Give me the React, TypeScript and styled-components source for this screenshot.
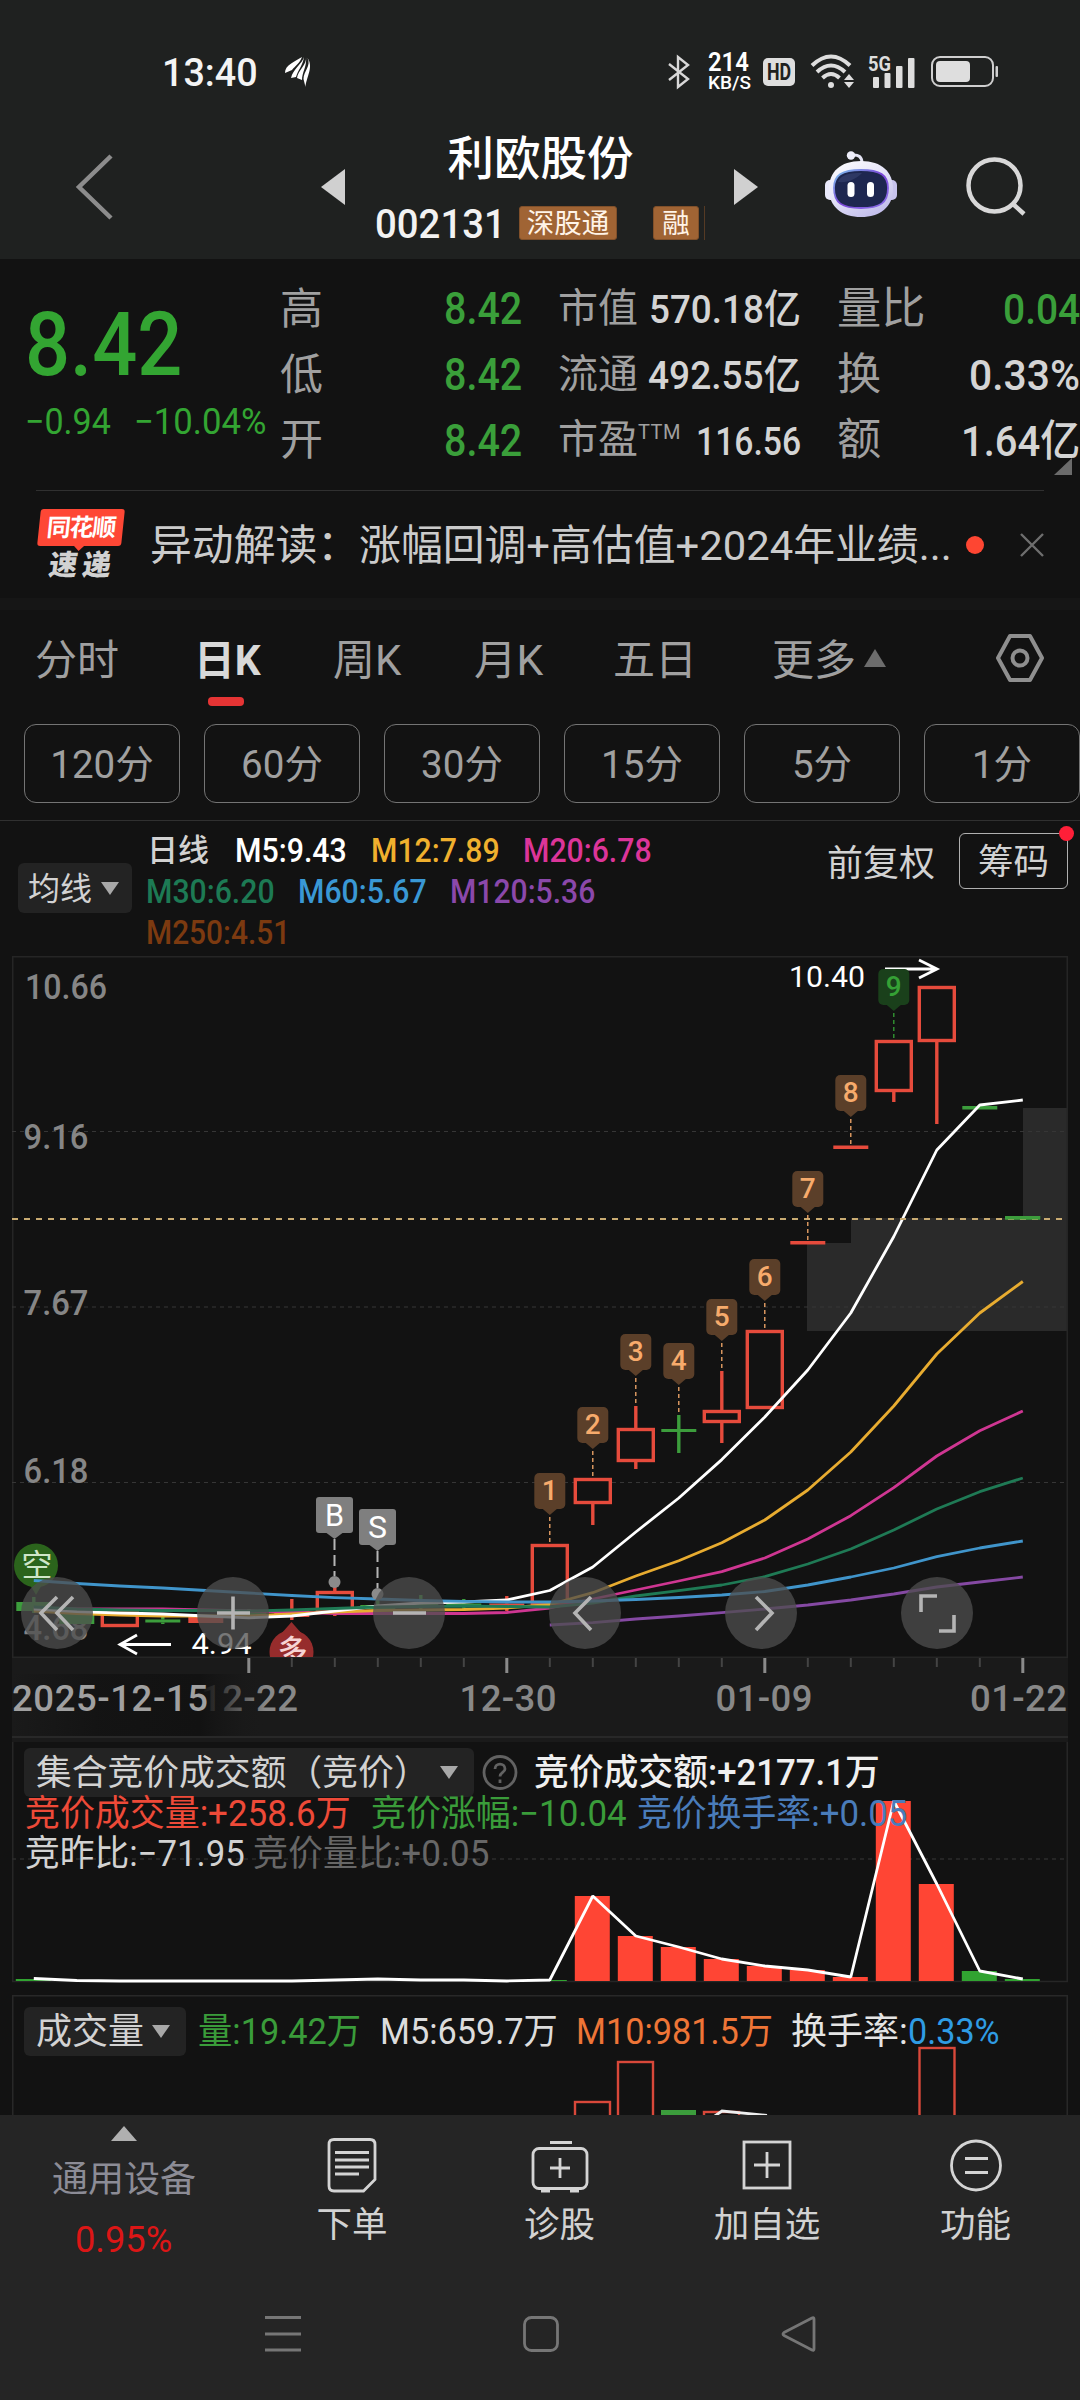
import React, { useLayoutEffect, useRef, useState } from 'react';
import styled, { createGlobalStyle } from 'styled-components';

const GlobalStyle = createGlobalStyle`
  * { box-sizing: border-box; }
  body { margin: 0; background: #121212; }
`;

const FONT = 'Roboto, "Noto Sans CJK SC", sans-serif';

const Screen = styled.main`
  width: 1080px;
  height: 2400px;
  overflow: hidden;
  background: #121212;
  color: #d2d2d2;
  font-family: ${FONT};
  display: flex;
  flex-direction: column;
`;

/* ---------- text squeezed to a fixed advance width ---------- */

const FitBox = styled.span<{ $w: number; $size: number; $color?: string; $weight?: number; $ml?: number; $lh?: number }>`
  display: block;
  flex: none;
  width: ${(p) => p.$w}px;
  margin-left: ${(p) => p.$ml ?? 0}px;
  font-size: ${(p) => p.$size}px;
  line-height: ${(p) => p.$lh ?? Math.round(p.$size * 1.15)}px;
  font-weight: ${(p) => p.$weight ?? 400};
  color: ${(p) => p.$color ?? 'inherit'};
  white-space: nowrap;
`;
const FitInner = styled.span`
  display: inline-block;
  transform-origin: 0 50%;
`;

type FitProps = { w: number; size: number; color?: string; weight?: number; ml?: number; lh?: number; children: React.ReactNode };

function Fit({ w, size, color, weight, ml, lh, children }: FitProps) {
  const ref = useRef<HTMLSpanElement>(null);
  const [k, setK] = useState(1);
  useLayoutEffect(() => {
    if (ref.current && ref.current.offsetWidth) setK(w / ref.current.offsetWidth);
  }, [w, children]);
  return (
    <FitBox $w={w} $size={size} $color={color} $weight={weight} $ml={ml} $lh={lh}>
      <FitInner ref={ref} style={{ transform: `translateY(1px) scaleX(${k})` }}>{children}</FitInner>
    </FitBox>
  );
}

/* ---------- header ---------- */

const Header = styled.header`
  height: 259px;
  flex: none;
  background: #1f2120;
`;
const StatusBar = styled.div`
  height: 96px;
  padding: 48px 82px 0 162px;
  display: flex;
  align-items: center;
`;
const Spacer = styled.div`
  flex: 1;
`;
const Speed = styled.div`
  margin-left: 18px;
  width: 42px;
  display: flex;
  flex-direction: column;
  color: #fff;
`;
const HdBadge = styled.div`
  margin-left: 13px;
  width: 32px;
  height: 28px;
  border-radius: 5px;
  background: #dedede;
  color: #1f2120;
  display: flex;
  justify-content: center;
  align-items: center;
`;
const StatusIcon = styled.svg<{ $ml: number }>`
  flex: none;
  overflow: visible;
  margin-left: ${(p) => p.$ml}px;
`;
const NavRow = styled.div`
  height: 163px;
  padding: 19px 0 0 74px;
  display: flex;
  align-items: center;
`;
const NavIcon = styled.svg<{ $ml?: number }>`
  flex: none;
  display: block;
  margin-left: ${(p) => p.$ml ?? 0}px;
`;
const TitleStack = styled.div`
  width: 329px;
  margin: 0 29px 3px 31px;
  display: flex;
  flex-direction: column;
  gap: 19px;
`;
const Title = styled.h1`
  margin: 0;
  font-size: 46.5px;
  line-height: 56px;
  font-weight: 500;
  color: #fff;
  text-align: center;
`;
const CodeRow = styled.div`
  height: 34px;
  display: flex;
  align-items: center;
`;
const Tag = styled.span<{ $w: number; $ml: number }>`
  width: ${(p) => p.$w}px;
  height: 34px;
  flex: none;
  margin-left: ${(p) => p.$ml}px;
  background: #a06434;
  border: 1px solid #80502a;
  border-radius: 3px;
  color: #fff4e8;
  font-size: 27.5px;
  line-height: 33px;
  text-align: center;
`;
const TagEdge = styled.i`
  width: 1px;
  height: 34px;
  margin-left: 5px;
  background: #553a24;
`;

/* ---------- quote ---------- */

const Quote = styled.section`
  position: relative;
  height: 231px;
  flex: none;
  padding: 17px 0 0 25px;
  display: flex;
`;
const PriceBlock = styled.div`
  width: 255px;
  padding-top: 23px;
  color: #33a532;
`;
const Delta = styled.div`
  display: flex;
  margin-top: 12px;
`;
const Stats = styled.div<{ $w: number; $ml?: number }>`
  width: ${(p) => p.$w}px;
  margin-left: ${(p) => p.$ml ?? 0}px;
  flex: none;
`;
const StatRow = styled.div`
  height: 65.7px;
  display: flex;
  align-items: center;
  justify-content: space-between;
`;
const StatLabel = styled.span<{ $size: number }>`
  font-size: ${(p) => p.$size}px;
  line-height: 60px;
  color: #a0a0a0;
  white-space: nowrap;
  sup { font-size: 20px; line-height: 0; vertical-align: 14px; letter-spacing: 0.5px; }
`;
const Corner = styled.i`
  position: absolute;
  right: 8px;
  bottom: 15px;
  border-left: 18px solid transparent;
  border-bottom: 17px solid #6b6b6b;
`;
const Rule = styled.div<{ $inset: number }>`
  height: 1px;
  flex: none;
  margin: 0 ${(p) => p.$inset}px;
  background: #303030;
`;

/* ---------- news ---------- */

const News = styled.section`
  height: 107px;
  flex: none;
  padding-left: 36px;
  display: flex;
  align-items: center;
`;
const Brand = styled.div`
  width: 90px;
  height: 74px;
  display: flex;
  flex-direction: column;
  align-items: center;
`;
const BrandTop = styled.div`
  position: relative;
  width: 84px;
  height: 37px;
  margin-top: 1px;
  border-radius: 3px;
  background: #fe4735;
  transform: skewX(-6deg);
  color: #fff;
  font-size: 24px;
  line-height: 38px;
  font-weight: 700;
  letter-spacing: -1.2px;
  text-align: center;
  &::after {
    content: '';
    position: absolute;
    left: 36px;
    top: 36px;
    border: 6px solid transparent;
    border-top-color: #fe4735;
    border-bottom: 0;
  }
`;
const BrandBottom = styled.div`
  transform: skewX(-8deg);
  font-size: 28.5px;
  line-height: 34px;
  font-weight: 900;
  letter-spacing: 5px;
  margin: 3px 0 0 4px;
  color: #d2d2d2;
`;
const Dot = styled.i<{ $ml: number }>`
  width: 18px;
  height: 18px;
  flex: none;
  border-radius: 50%;
  margin-left: ${(p) => p.$ml}px;
  background: #fe4632;
`;
const Band = styled.div`
  height: 12px;
  flex: none;
  background: #161616;
`;

/* ---------- tabs ---------- */

const Tabs = styled.nav`
  height: 114px;
  flex: none;
  padding: 13px 0 0 35px;
  display: flex;
`;
const Tab = styled.div<{ $ml: number; $active?: boolean }>`
  margin-left: ${(p) => p.$ml}px;
  height: 83px;
  display: flex;
  flex-direction: column;
  align-items: center;
  color: ${(p) => (p.$active ? '#d8d8d8' : '#a0a0a0')};
  &::after {
    content: '';
    display: ${(p) => (p.$active ? 'block' : 'none')};
    width: 36px;
    height: 9px;
    margin-right: 3px;
    border-radius: 4px;
    background: #e53434;
  }
`;
const Periods = styled.div`
  height: 96px;
  flex: none;
  padding-left: 24px;
  display: flex;
  gap: 24px;
`;
const Pill = styled.button`
  width: 156px;
  height: 79px;
  flex: none;
  padding: 2px 0 0;
  border: 1.5px solid #747474;
  border-radius: 12px;
  background: none;
  font: 400 38.5px/74px ${FONT};
  color: #a0a0a0;
`;

/* ---------- legend ---------- */

const Legend = styled.section`
  position: relative;
  height: 132px;
  flex: none;
  padding-left: 18px;
  display: flex;
  align-items: flex-start;
`;
const Chip = styled.div<{ $w: number; $h: number; $mt?: number; $pl: number }>`
  width: ${(p) => p.$w}px;
  height: ${(p) => p.$h}px;
  flex: none;
  margin-top: ${(p) => p.$mt ?? 0}px;
  padding-left: ${(p) => p.$pl}px;
  border-radius: 6px;
  background: #232323;
  display: flex;
  align-items: center;
`;
const Down = styled.i<{ $ml: number }>`
  margin-left: ${(p) => p.$ml}px;
  border: 9.5px solid transparent;
  border-top: 13px solid #a8a8a8;
  border-bottom: 0;
`;
const LegendRows = styled.div`
  width: 666px;
  margin: 8px 0 0 14px;
`;
const LegendRow = styled.div`
  height: 41px;
  display: flex;
  align-items: center;
`;
const Adjust = styled.div`
  margin-top: 18px;
`;
const ChipsButton = styled.div`
  position: relative;
  width: 109px;
  height: 56px;
  margin: 12px 0 0 24px;
  border: 1.5px solid #b0b0b0;
  border-radius: 6px;
  font-size: 35.5px;
  line-height: 56px;
  text-align: center;
  &::after {
    content: '';
    position: absolute;
    top: -8px;
    right: -7px;
    width: 15px;
    height: 15px;
    border-radius: 50%;
    background: #ff1f38;
  }
`;

/* ---------- charts ---------- */

const ChartBox = styled.section<{ $h: number }>`
  position: relative;
  height: ${(p) => p.$h}px;
  flex: none;
`;
const Canvas = styled.svg`
  display: block;
  font-family: ${FONT};
`;
const BackCanvas = styled(Canvas)`
  position: absolute;
  inset: 0;
`;
const Controls = styled.div`
  position: absolute;
  left: 21px;
  top: 624px;
  display: flex;
  gap: 104px;
`;
const RoundButton = styled.button`
  width: 72px;
  height: 72px;
  padding: 0;
  border: 0;
  border-radius: 50%;
  background: rgba(78, 78, 78, 0.76);
`;
const Overlay = styled.div<{ $pt: number }>`
  position: relative;
  padding: ${(p) => p.$pt}px 0 0 24px;
`;
const TextRow = styled.div<{ $h: number }>`
  height: ${(p) => p.$h}px;
  display: flex;
  align-items: center;
`;

/* ---------- bottom ---------- */

const Footer = styled.footer`
  height: 285px;
  flex: none;
  background: #252525;
`;
const ActionRow = styled.div`
  height: 165px;
  display: grid;
  grid-template-columns: 248px 208px 207px 208px 209px;
`;
const Sector = styled.div`
  display: flex;
  flex-direction: column;
  align-items: center;
  padding-top: 11px;
`;
const Up = styled.i<{ $s: number; $h: number; $c: string }>`
  border: ${(p) => p.$s}px solid transparent;
  border-bottom: ${(p) => p.$h}px solid ${(p) => p.$c};
  border-top: 0;
`;
const MoreArrow = styled(Up)`
  height: 18px;
  margin: 26px 0 0 8px;
`;
const GearSlot = styled.div`
  margin: 10px 0 0 109px;
`;
const SectorName = styled.div`
  margin-top: 16px;
  font-size: 36px;
  line-height: 46px;
  color: #8c8c96;
`;
const SectorPct = styled.div`
  margin-top: 14px;
  font-size: 37px;
  line-height: 46px;
  color: #dc1616;
  transform: scaleX(0.98);
`;
const Action = styled.div`
  display: flex;
  flex-direction: column;
  align-items: center;
  padding-top: 20px;
  font-size: 35.5px;
  line-height: 50px;
  svg { display: block; margin-bottom: 3px; }
`;
const SysNav = styled.div`
  height: 120px;
  padding: 34px 0 0 263px;
  display: flex;
`;

/* ---------- data ---------- */

const X = (i: number) => 33.8 + i * 43;
const RED = '#e64b3c';
const GREEN = '#3c9d3c';

type Line = { color: string; from: number; ys: number[] };
const LINES: Line[] = [
  { color: '#8549a3', from: 12, ys: [1625, 1622.7, 1619, 1616, 1612.7, 1609, 1605, 1600, 1594, 1587, 1582, 1577] },
  { color: '#cf3692', from: 0, ys: [1608, 1609, 1609, 1609, 1610, 1611, 1612, 1613.5, 1613.5, 1613.5, 1613.5, 1612.5, 1608, 1599, 1590, 1581, 1571.7, 1558, 1539, 1515.7, 1487.7, 1456, 1430.7, 1411] },
  { color: '#e8ac30', from: 0, ys: [1611, 1613.5, 1615, 1616, 1616, 1616, 1614, 1612, 1610.5, 1610, 1609.5, 1608, 1604.5, 1592.7, 1576, 1560.7, 1542.7, 1520, 1490, 1452, 1406, 1354, 1313, 1281.5] },
  { color: '#ffffff', from: 0, ys: [1609, 1611.5, 1613, 1614, 1616, 1617.8, 1616, 1611, 1606, 1603, 1602, 1600, 1590.5, 1567, 1532, 1498, 1459.6, 1417, 1370, 1313, 1236.5, 1150, 1105, 1100] },
  { color: '#1f7a55', from: 0, ys: [1607, 1609, 1610, 1610.5, 1610.5, 1611, 1610, 1608.5, 1607, 1606.5, 1606, 1606.5, 1607, 1603, 1596, 1590.7, 1585, 1576.7, 1564, 1549, 1530, 1509, 1491.7, 1478] },
  { color: '#4095cb', from: 0, ys: [1580.5, 1583.5, 1586, 1588, 1590.5, 1593, 1595.5, 1597.7, 1599, 1600.5, 1601.3, 1602, 1602, 1601, 1599.5, 1597.5, 1595, 1591.5, 1585, 1577, 1568, 1556.7, 1548, 1541] },
];

type Candle = { i: number; c: string; top: number; bot: number; hi?: number; lo?: number; fill?: boolean };
const CANDLES: Candle[] = [
  { i: 0, c: GREEN, top: 1602, bot: 1611, hi: 1597, lo: 1613, fill: true },
  { i: 1, c: GREEN, top: 1614, bot: 1624, fill: true },
  { i: 2, c: RED, top: 1611, bot: 1627 },
  { i: 3, c: GREEN, top: 1619.5, bot: 1622.5, hi: 1617, lo: 1624, fill: true },
  { i: 4, c: RED, top: 1617, bot: 1623, fill: true },
  { i: 5, c: GREEN, top: 1612, bot: 1615, hi: 1609, lo: 1618, fill: true },
  { i: 6, c: RED, top: 1609, bot: 1617, hi: 1599, lo: 1620, fill: true },
  { i: 7, c: RED, top: 1591, bot: 1613, hi: 1582, lo: 1616 },
  { i: 8, c: GREEN, top: 1605, bot: 1609, hi: 1594, lo: 1611, fill: true },
  { i: 9, c: GREEN, top: 1603, bot: 1607, hi: 1595, lo: 1609, fill: true },
  { i: 10, c: GREEN, top: 1603.5, bot: 1606.5, hi: 1599, lo: 1611, fill: true },
  { i: 11, c: RED, top: 1603.5, bot: 1606.5, hi: 1596, lo: 1611, fill: true },
  { i: 12, c: RED, top: 1544, bot: 1605 },
  { i: 13, c: RED, top: 1478, bot: 1504, lo: 1525 },
  { i: 14, c: RED, top: 1428, bot: 1462, hi: 1406, lo: 1469 },
  { i: 15, c: GREEN, top: 1429, bot: 1432, hi: 1415, lo: 1453, fill: true },
  { i: 16, c: RED, top: 1410, bot: 1423, hi: 1371, lo: 1443 },
  { i: 17, c: RED, top: 1330, bot: 1409 },
  { i: 18, c: RED, top: 1241, bot: 1244.5, fill: true },
  { i: 19, c: RED, top: 1145.5, bot: 1149, fill: true },
  { i: 20, c: RED, top: 1040, bot: 1092, lo: 1102 },
  { i: 21, c: RED, top: 986, bot: 1042, lo: 1124 },
  { i: 22, c: GREEN, top: 1106, bot: 1109.5, fill: true },
  { i: 23, c: GREEN, top: 1216, bot: 1219.5, fill: true },
];

const MARKS = [
  [1, 1473, 1544], [2, 1407, 1478], [3, 1334, 1406], [4, 1343, 1415], [5, 1299, 1371],
  [6, 1259, 1330], [7, 1171, 1242], [8, 1075, 1147], [9, 969, 1040],
];

const points = (l: Line) => l.ys.map((y, k) => `${X(l.from + k)},${y}`).join(' ');

function CandleShape({ i, c, top, bot, hi, lo, fill }: Candle) {
  const x = X(i);
  return (
    <g stroke={c} strokeWidth={3.4}>
      {hi !== undefined && <line x1={x} x2={x} y1={hi} y2={top} />}
      {lo !== undefined && <line x1={x} x2={x} y1={bot} y2={lo} />}
      {fill
        ? <rect x={x - 17.5} y={top} width={35} height={bot - top} fill={c} stroke="none" />
        : <rect x={x - 17.5} y={top + 1.5} width={35} height={bot - top - 3} fill="#121212" />}
    </g>
  );
}

function Marker({ n, y, end }: { n: number; y: number; end: number }) {
  const x = X(n + 11);
  const green = n === 9;
  const fg = green ? '#35a035' : '#f7ab6c';
  return (
    <g>
      <rect x={x - 15.5} y={y} width={31} height={36} rx={5} fill={green ? '#1a401b' : '#5b3f29'} />
      <path d={`M${x - 7} ${y + 36}h14l-7 6z`} fill={green ? '#1a401b' : '#5b3f29'} />
      <line x1={x} x2={x} y1={y + 44} y2={end} stroke={fg} strokeWidth={1.3} strokeDasharray="4 3" />
      <text x={x} y={y + 27} textAnchor="middle" fontSize={28} fontWeight={500} fill={fg}>{n}</text>
    </g>
  );
}

function TradeFlag({ x, y, end, label }: { x: number; y: number; end: number; label: string }) {
  return (
    <g>
      <rect x={x - 18.5} y={y} width={37} height={36} rx={3} fill="#7f7f7f" />
      <path d={`M${x - 8} ${y + 36}h16l-8 6z`} fill="#7f7f7f" />
      <line x1={x} x2={x} y1={y + 42} y2={end - 6} stroke="#b5b5b5" strokeWidth={2} strokeDasharray="11 5" />
      <circle cx={x} cy={end} r={6} fill="#8b8b8b" />
      <text x={x} y={y + 29} textAnchor="middle" fontSize={32} fill="#fff" textLength={19} lengthAdjust="spacingAndGlyphs">{label}</text>
    </g>
  );
}

const PRICE_LABELS: [string, number, number, number][] = [
  ['10.66', 25, 998.5, 82], ['9.16', 23.5, 1149, 65], ['7.67', 23.5, 1315, 65], ['6.18', 23.5, 1482.5, 65], ['4.68', 23.5, 1640, 65],
];
const DATES: [string, number][] = [['12-22', 201], ['12-30', 459.5], ['01-09', 715.5], ['01-22', 970]];

function MainChart() {
  return (
    <Canvas width={1080} height={789} viewBox="0 953 1080 789">
      <defs>
        <linearGradient id="fade" x1="0" x2="1" y1="0" y2="0">
          <stop offset="0" stopColor="#121212" stopOpacity="0" />
          <stop offset="0.35" stopColor="#121212" stopOpacity="0.8" />
          <stop offset="0.74" stopColor="#121212" />
          <stop offset="1" stopColor="#1a1a1a" stopOpacity="0" />
        </linearGradient>
        <clipPath id="plot"><rect x={12} y={956} width={1056} height={701} /></clipPath>
      </defs>
      <rect x={12} y={1658} width={1056} height={84} fill="#1a1a1a" />
      <path d="M807 1243h44v-25h172v-110h45v223H807z" fill="#2a2a2a" />
      <rect x={12.75} y={956.75} width={1054.5} height={700.5} fill="none" stroke="#252525" strokeWidth={1.5} />
      {[1131.5, 1307, 1482.5].map((y) => (
        <line key={y} x1={12} x2={1068} y1={y} y2={y} stroke="#363636" strokeWidth={1} strokeDasharray="4 4" />
      ))}
      {PRICE_LABELS.map(([t, x, y, w]) => (
        <text key={t} x={x} y={y} fontSize={35.5} fontWeight={500} fill="#868686" textLength={w} lengthAdjust="spacingAndGlyphs">{t}</text>
      ))}
      {CANDLES.map((c) => <CandleShape key={c.i} {...c} />)}
      <g clipPath="url(#plot)">
        <circle cx={36} cy={1565.5} r={22} fill="#2b641c" />
        <path d="M29 1583l7 12 7-12z" fill="#2b641c" />
        <text x={37} y={1575.5} textAnchor="middle" fontSize={31} fill="#cfe6c8">空</text>
        <circle cx={291.5} cy={1652} r={22} fill="#962c2c" />
        <path d="M281 1634l10.5-12 10.5 12z" fill="#962c2c" />
        <text x={292.5} y={1661} textAnchor="middle" fontSize={30} fontWeight={500} fill="#f6d4d4">多</text>
      </g>
      {LINES.map((l) => (
        <polyline key={l.color} points={points(l)} fill="none" stroke={l.color} strokeWidth={2.8} strokeLinejoin="round" />
      ))}
      <line x1={12} x2={1068} y1={1219} y2={1219} stroke="#c9ab72" strokeWidth={2} strokeDasharray="6 6" />
      <rect x={1005} y={1216} width={35} height={3.5} fill={GREEN} />
      <path d="M885 969h50M919 960l18 9-18 9" fill="none" stroke="#fff" strokeWidth={2.8} />
      {MARKS.map(([n, y, end]) => <Marker key={n} n={n} y={y} end={end} />)}
      <text x={789} y={986.5} fontSize={29.5} fill="#fff" textLength={76} lengthAdjust="spacingAndGlyphs">10.40</text>
      <TradeFlag x={334.5} y={1497} end={1582} label="B" />
      <TradeFlag x={377.5} y={1509} end={1594} label="S" />
      <path d="M171 1644.5h-50M137 1635l-17 9.5 17 9.5" fill="none" stroke="#fff" strokeWidth={2.8} />
      <text x={191.5} y={1653.5} fontSize={29.5} fill="#fff" textLength={60} lengthAdjust="spacingAndGlyphs">4.94</text>

      {Array.from({ length: 19 }, (_, k) => k + 5).map((i) => {
        const major = (i - 5) % 6 === 0;
        return <line key={i} x1={X(i)} x2={X(i)} y1={1658} y2={major ? 1673 : 1667} stroke={major ? '#8a8a8a' : '#444'} strokeWidth={major ? 3 : 2} />;
      })}
      {DATES.map(([t, x]) => (
        <text key={t} x={x} y={1711} fontSize={36.5} fontWeight={500} fill="#888" textLength={97} lengthAdjust="spacing">{t}</text>
      ))}
      <rect x={12} y={1674} width={254} height={62} fill="url(#fade)" />
      <text x={12} y={1711} fontSize={36.5} fontWeight={500} fill="#a0a0a0" textLength={196} lengthAdjust="spacing">2025-12-15</text>
      <line x1={12} x2={1068} y1={1737} y2={1737} stroke="#282828" strokeWidth={2} />
    </Canvas>
  );
}

const BARS: [number, number][] = [
  [0, 1979], [12, 1980], [13, 1896], [14, 1936], [15, 1947], [16, 1959], [17, 1966], [18, 1970], [19, 1977], [20, 1801], [21, 1884], [22, 1971], [23, 1979],
];
const AUCTION = [1978.5, 1980.5, 1981, 1981, 1981, 1981, 1981, 1980, 1979, 1980, 1980, 1981, 1980, 1896, 1936, 1947, 1959, 1966, 1970, 1977, 1801, 1884, 1971, 1979];

function AuctionChart() {
  return (
    <BackCanvas width={1080} height={253} viewBox="0 1742 1080 253">
      <path d="M12.75 1742V1981.5H1067.25V1742" fill="none" stroke="#262626" strokeWidth={1.5} />
      <line x1={12} x2={1068} y1={1859} y2={1859} stroke="#2c2c2c" strokeWidth={1.5} strokeDasharray="4 4" />
      {BARS.map(([i, y]) => (
        <rect key={i} x={X(i) - 18} y={y} width={35} height={1981 - y} fill={i > 21 || i < 13 ? '#31a331' : '#ff4534'} />
      ))}
      <polyline points={AUCTION.map((y, i) => `${X(i)},${y}`).join(' ')} fill="none" stroke="#fff" strokeWidth={2.8} strokeLinejoin="bevel" />
    </BackCanvas>
  );
}

function VolumeChart() {
  return (
    <BackCanvas width={1080} height={120} viewBox="0 1995 1080 120">
      <path d="M12.75 2120V1995.75H1067.25V2120" fill="none" stroke="#282828" strokeWidth={1.5} />
      <g fill="none" stroke="#d8483a" strokeWidth={2.4}>
        <rect x={575} y={2102} width={35} height={40} />
        <rect x={618} y={2062} width={35} height={80} />
        <rect x={704} y={2112} width={35} height={40} />
        <rect x={919.5} y={2048} width={35} height={80} />
      </g>
      <rect x={661} y={2110} width={35} height={10} fill={GREEN} />
      <path d="M709 2120l13-9 45 4.5" fill="none" stroke="#eee" strokeWidth={2.8} />
    </BackCanvas>
  );
}

const CONTROL_PATHS = [
  'M36 20L20 36l16 17M52 20L36 36l16 17',
  'M36 19.5v33M20 36h33',
  'M20 36h33',
  'M42 20L26 36l16 17',
  'M31 20l16 16-16 17',
  'M36 19H20v16M38 54h15V38',
];

const STATS_B: [React.ReactNode, string, number][] = [
  ['市值', '570.18亿', 152], ['流通', '492.55亿', 153], [<>市盈<sup>TTM</sup></>, '116.56', 105],
];
const STATS_C: [string, string, number, string][] = [
  ['量比', '0.04', 77, '#3a9f3a'], ['换', '0.33%', 111, '#d4d4d4'], ['额', '1.64亿', 119, '#d4d4d4'],
];

const TABS: [string, number, number][] = [['分时', 0, 84], ['日K', 75, 67], ['周K', 72, 68], ['月K', 73, 69], ['五日', 70, 84], ['更多', 75, 84]];

export default function App() {
  return (
    <Screen>
      <GlobalStyle />
      <Header>
        <StatusBar>
          <Fit w={96} size={38.5} weight={500} color="#f4f4f4">13:40</Fit>
          <StatusIcon $ml={26} width={28} height={32} viewBox="0 0 28 32" fill="#fff">
            <path d="M18 1C10 6 1 9 1 17l7-3C11 10 16 7 18 1z" />
            <path d="M20 1C18 8 9 13 7 22l5-1c2-7 7-12 8-20z" />
            <path d="M22 1c1 8-8 13-9 21l5 2c0-8 5-13 4-23z" />
            <path d="M23.5 2c4 8-4 13-4 21l2 8C22 22 30 11 23.5 2z" />
          </StatusIcon>
          <Spacer />
          <StatusIcon $ml={0} width={22} height={34} viewBox="0 0 22 34" fill="none" stroke="#d8d8d8" strokeWidth={2.4}>
            <path d="M1 9l19 15-10 8V2l10 8L1 25" />
          </StatusIcon>
          <Speed>
            <Fit w={41} size={25} weight={600} lh={20}>214</Fit>
            <Fit w={43} size={19} weight={500} lh={20}>KB/S</Fit>
          </Speed>
          <HdBadge><Fit w={24} size={23} weight={700}>HD</Fit></HdBadge>
          <StatusIcon $ml={15} width={46} height={36} viewBox="0 0 46 36" fill="none" stroke="#dedede" strokeWidth={4}>
            <path d="M2 11.5Q21 -6.5 40 11.5" />
            <path d="M7 18Q21 5 35 18" />
            <path d="M12.5 24Q21 16 29.5 24" />
            <circle cx={21} cy={31} r={3} fill="#dedede" stroke="none" />
            <path d="M34 26l5-6 5 6zM34 28l5 6 5-6z" fill="#dedede" stroke="none" />
          </StatusIcon>
          <StatusIcon $ml={12} width={48} height={34} viewBox="0 0 48 34" fill="#dedede">
            <text x={0} y={16} fontSize={20.5} fontWeight={700} fontFamily="Roboto, sans-serif" textLength={23} lengthAdjust="spacingAndGlyphs">5G</text>
            <rect x={5} y={22} width={6} height={11} rx={1} />
            <rect x={16.5} y={18} width={6} height={15} rx={1} />
            <rect x={28} y={11} width={6.5} height={22} rx={1} />
            <rect x={40} y={3} width={6.5} height={30} rx={1} />
          </StatusIcon>
          <StatusIcon $ml={15} width={67} height={32} viewBox="0 0 67 32">
            <rect x={1} y={1} width={61} height={29} rx={8} fill="none" stroke="#cfcfcf" strokeWidth={2} />
            <rect x={5} y={5} width={34} height={21} rx={4} fill="#dedede" />
            <rect x={64.5} y={10} width={2.5} height={11} rx={1} fill="#cfcfcf" />
          </StatusIcon>
        </StatusBar>
        <NavRow>
          <NavIcon width={40} height={66} viewBox="0 0 40 66" fill="none" stroke="#8c8c8c" strokeWidth={4.5}>
            <path d="M37 2L5 33l32 31" />
          </NavIcon>
          <NavIcon $ml={207} width={24} height={36} viewBox="0 0 24 36" fill="#d0d0d0"><path d="M24 0v36L0 18z" /></NavIcon>
          <TitleStack>
            <Title>利欧股份</Title>
            <CodeRow>
              <Fit w={131} size={41} weight={500} color="#f2f2f2" lh={36} ml={-1}>002131</Fit>
              <Tag $w={98} $ml={13}>深股通</Tag>
              <Tag $w={46} $ml={36}>融</Tag>
              <TagEdge />
            </CodeRow>
          </TitleStack>
          <NavIcon width={24} height={36} viewBox="0 0 24 36" fill="#d0d0d0"><path d="M0 0v36l24-18z" /></NavIcon>
          <NavIcon $ml={66} width={74} height={72} viewBox="0 0 74 72">
            <defs>
              <linearGradient id="shell" x1="0" y1="0" x2="0.6" y2="1">
                <stop offset="0" stopColor="#ffffff" />
                <stop offset="0.55" stopColor="#e3e2f8" />
                <stop offset="1" stopColor="#c4c0ec" />
              </linearGradient>
              <linearGradient id="rim" x1="0" y1="0" x2="1" y2="1">
                <stop offset="0" stopColor="#7cc6ee" />
                <stop offset="0.5" stopColor="#7a45d8" />
                <stop offset="1" stopColor="#8a72e8" />
              </linearGradient>
            </defs>
            <path d="M28 4q10-1 10 8" fill="none" stroke="#e4e4f4" strokeWidth={3} />
            <circle cx={27} cy={4.5} r={4.2} fill="#eeeefa" />
            <rect x={1} y={29} width={12} height={20} rx={5} fill="#e9e9fb" />
            <rect x={61} y={29} width={12} height={20} rx={5} fill="#c8c4ee" />
            <path d="M37 10c21 0 32 11 32 28 0 18-13 28-32 28S5 56 5 38c0-17 11-28 32-28z" fill="url(#shell)" />
            <path d="M37 19c19 0 27 5 27 18 0 15-8 20-27 20s-27-5-27-20c0-13 8-18 27-18z" fill="#1e2750" stroke="url(#rim)" strokeWidth={1.8} />
            <path d="M14 31c3-8 12-9 24-9-6 6-14 10-24 9z" fill="#35406c" opacity={0.7} />
            <rect x={23.5} y={31} width={7} height={15} rx={3.5} fill="#fff" />
            <rect x={43} y={31} width={7} height={15} rx={3.5} fill="#fff" />
          </NavIcon>
          <NavIcon $ml={67} width={64} height={64} viewBox="0 0 64 64" fill="none" stroke="#d8d8d8" strokeWidth={4.5}>
            <circle cx={29.5} cy={30.5} r={26} />
            <path d="M48 49l11 10" />
          </NavIcon>
        </NavRow>
      </Header>

      <Quote>
        <PriceBlock>
          <Fit w={157} size={89} weight={500} lh={90}>8.42</Fit>
          <Delta>
            <Fit w={86} size={36} lh={40}>−0.94</Fit>
            <Fit w={132} size={36} lh={40} ml={23}>−10.04%</Fit>
          </Delta>
        </PriceBlock>
        <Stats $w={242}>
          {['高', '低', '开'].map((t) => (
            <StatRow key={t}>
              <StatLabel $size={43}>{t}</StatLabel>
              <Fit w={78} size={44} color="#3a9f3a" weight={500}>8.42</Fit>
            </StatRow>
          ))}
        </Stats>
        <Stats $w={243} $ml={36}>
          {STATS_B.map(([l, v, w]) => (
            <StatRow key={v}>
              <StatLabel $size={40}>{l}</StatLabel>
              <Fit w={w} size={39.5} weight={500} color="#d4d4d4">{v}</Fit>
            </StatRow>
          ))}
        </Stats>
        <Stats $w={243} $ml={36}>
          {STATS_C.map(([l, v, w, c]) => (
            <StatRow key={v}>
              <StatLabel $size={44.2}>{l}</StatLabel>
              <Fit w={w} size={43} weight={500} color={c}>{v}</Fit>
            </StatRow>
          ))}
        </Stats>
        <Corner />
      </Quote>
      <Rule $inset={36} />

      <News>
        <Brand>
          <BrandTop>同花顺</BrandTop>
          <BrandBottom>速递</BrandBottom>
        </Brand>
        <Fit w={802} size={41.5} lh={56} ml={24} color="#cbcbcb">异动解读：涨幅回调+高估值+2024年业绩...</Fit>
        <Dot $ml={14} />
        <NavIcon $ml={36} width={24} height={24} viewBox="0 0 24 24" stroke="#6e6e6e" strokeWidth={2.4}>
          <path d="M1 1l22 22M23 1L1 23" />
        </NavIcon>
      </News>
      <Band />

      <Tabs>
        {TABS.map(([t, ml, w]) => (
          <Tab key={t} $ml={ml} $active={t === '日K'}>
            <Fit w={w} size={42} lh={74} weight={t === '日K' ? 700 : 400}>{t}</Fit>
          </Tab>
        ))}
        <MoreArrow $s={11} $h={18} $c="#6c6c6c" />
        <GearSlot>
          <NavIcon width={50} height={50} viewBox="0 0 50 50" fill="none" stroke="#8f8f8f" strokeWidth={4} strokeLinejoin="round">
            <path d="M15 3h20l12 22-12 22H15L3 25z" />
            <circle cx={25} cy={25} r={7.5} />
          </NavIcon>
        </GearSlot>
      </Tabs>
      <Periods>
        {['120分', '60分', '30分', '15分', '5分', '1分'].map((t) => <Pill key={t}>{t}</Pill>)}
      </Periods>
      <Rule $inset={0} />

      <Legend>
        <Chip $w={114} $h={50} $mt={42} $pl={10}>
          <Fit w={64} size={32}>均线</Fit>
          <Down $ml={9} />
        </Chip>
        <LegendRows>
          <LegendRow>
            <Fit w={62} size={31} ml={1} weight={500}>日线</Fit>
            <Fit w={112} size={33} ml={26} weight={500} color="#fff">M5:9.43</Fit>
            <Fit w={129} size={33} ml={24} weight={500} color="#f0b02e">M12:7.89</Fit>
            <Fit w={129} size={33} ml={23} weight={500} color="#dc3599">M20:6.78</Fit>
          </LegendRow>
          <LegendRow>
            <Fit w={129} size={33} weight={500} color="#1d7a54">M30:6.20</Fit>
            <Fit w={129} size={33} ml={23} weight={500} color="#3a98d4">M60:5.67</Fit>
            <Fit w={145} size={33} ml={23} weight={500} color="#8b48ab">M120:5.36</Fit>
          </LegendRow>
          <LegendRow>
            <Fit w={144} size={33} weight={500} color="#7c3a10">M250:4.51</Fit>
          </LegendRow>
        </LegendRows>
        <Adjust><Fit w={108} size={36} lh={48} ml={15}>前复权</Fit></Adjust>
        <ChipsButton>筹码</ChipsButton>
      </Legend>

      <ChartBox $h={789}>
        <MainChart />
        <Controls>
          {CONTROL_PATHS.map((d) => (
            <RoundButton key={d}>
              <NavIcon width={72} height={72} viewBox="0 0 72 72" fill="none" stroke="#b4b4b4" strokeWidth={3.6}><path d={d} /></NavIcon>
            </RoundButton>
          ))}
        </Controls>
      </ChartBox>

      <ChartBox $h={253}>
        <AuctionChart />
        <Overlay $pt={6}>
          <TextRow $h={49}>
            <Chip $w={450} $h={49} $pl={12}>
              <Fit w={394} size={35.5}>集合竞价成交额（竞价）</Fit>
              <Down $ml={10} />
            </Chip>
            <NavIcon $ml={8} width={36} height={36} viewBox="0 0 36 36" fill="none" stroke="#626262" strokeWidth={2.8}>
              <circle cx={18} cy={17.5} r={16} />
              <path d="M13 14c0-6.5 10-6.5 10 0 0 3.5-5 3.5-5 7.5M18 24.5v3.5" />
            </NavIcon>
            <Fit w={346} size={36} ml={16} weight={500} color="#f0f0f0">竞价成交额:+2177.1万</Fit>
          </TextRow>
          <TextRow $h={32}>
            <Fit w={326} size={36} ml={1} color="#ee4a38">竞价成交量:+258.6万</Fit>
            <Fit w={256} size={36} ml={20} color="#3a9c3a">竞价涨幅:−10.04</Fit>
            <Fit w={270} size={36} ml={10} color="#4a7cba">竞价换手率:+0.05</Fit>
          </TextRow>
          <TextRow $h={48}>
            <Fit w={220} size={36} ml={1}>竞昨比:−71.95</Fit>
            <Fit w={236} size={36} ml={8} color="#676767">竞价量比:+0.05</Fit>
          </TextRow>
        </Overlay>
      </ChartBox>

      <ChartBox $h={120}>
        <VolumeChart />
        <Overlay $pt={12}>
          <TextRow $h={49}>
            <Chip $w={162} $h={49} $pl={12}>
              <Fit w={108} size={36}>成交量</Fit>
              <Down $ml={8} />
            </Chip>
            <Fit w={163} size={36} ml={12} color="#3a9c3a">量:19.42万</Fit>
            <Fit w={178} size={36} ml={19} color="#dcdcdc">M5:659.7万</Fit>
            <Fit w={197} size={36} ml={18} color="#ee7537">M10:981.5万</Fit>
            <Fit w={117} size={36} ml={18} color="#e4e4e4">换手率:</Fit>
            <Fit w={92} size={36} color="#2f9ce4">0.33%</Fit>
          </TextRow>
        </Overlay>
      </ChartBox>

      <Footer>
        <ActionRow>
          <Sector>
            <Up $s={13} $h={15} $c="#b0b0b0" />
            <SectorName>通用设备</SectorName>
            <SectorPct>0.95%</SectorPct>
          </Sector>
          <Action>
            <svg width={60} height={62} viewBox="0 0 60 62" fill="none" stroke="#d4d4d4" strokeWidth={2.8}>
              <path d="M12 4.5h36q5 0 5 5v35L41.500 56H12q-5 0-5-5V9.500q0-5 5-5z" />
              <path d="M13 17.5h34M13 25h34M13 32h34M13 39h24" />
            </svg>
            下单
          </Action>
          <Action>
            <svg width={60} height={62} viewBox="0 0 60 62" fill="none" stroke="#d4d4d4" strokeWidth={2.8}>
              <rect x={3} y={13.5} width={54} height={40} rx={6} />
              <path d="M20 7.5h22M30 23v20M20 33h20M11 56h9M40 56h9" />
            </svg>
            诊股
          </Action>
          <Action>
            <svg width={60} height={62} viewBox="0 0 60 62" fill="none" stroke="#d4d4d4" strokeWidth={2.8}>
              <rect x={7} y={7} width={46} height={46} />
              <path d="M30 17v26M17 30h26" />
            </svg>
            加自选
          </Action>
          <Action>
            <svg width={60} height={62} viewBox="0 0 60 62" fill="none" stroke="#d4d4d4" strokeWidth={2.8}>
              <circle cx={30} cy={30.5} r={24.5} />
              <path d="M19 23.5h23M19 37.5h23" />
            </svg>
            功能
          </Action>
        </ActionRow>
        <SysNav>
          <NavIcon width={40} height={40} viewBox="0 0 40 40" stroke="#767676" strokeWidth={3}>
            <path d="M2 3.5h36M2 20h36M2 36h36" />
          </NavIcon>
          <NavIcon $ml={218} width={40} height={40} viewBox="0 0 40 40" fill="none" stroke="#767676" strokeWidth={2.8}>
            <rect x={3.5} y={3.5} width={33} height={33} rx={7} />
          </NavIcon>
          <NavIcon $ml={218} width={40} height={40} viewBox="0 0 40 40" fill="none" stroke="#767676" strokeWidth={2.8} strokeLinejoin="round">
            <path d="M35 5v30q0 2-2 1L5 21.500q-2-1.500 0-3L33 4q2-1 2 1z" />
          </NavIcon>
        </SysNav>
      </Footer>
    </Screen>
  );
}
